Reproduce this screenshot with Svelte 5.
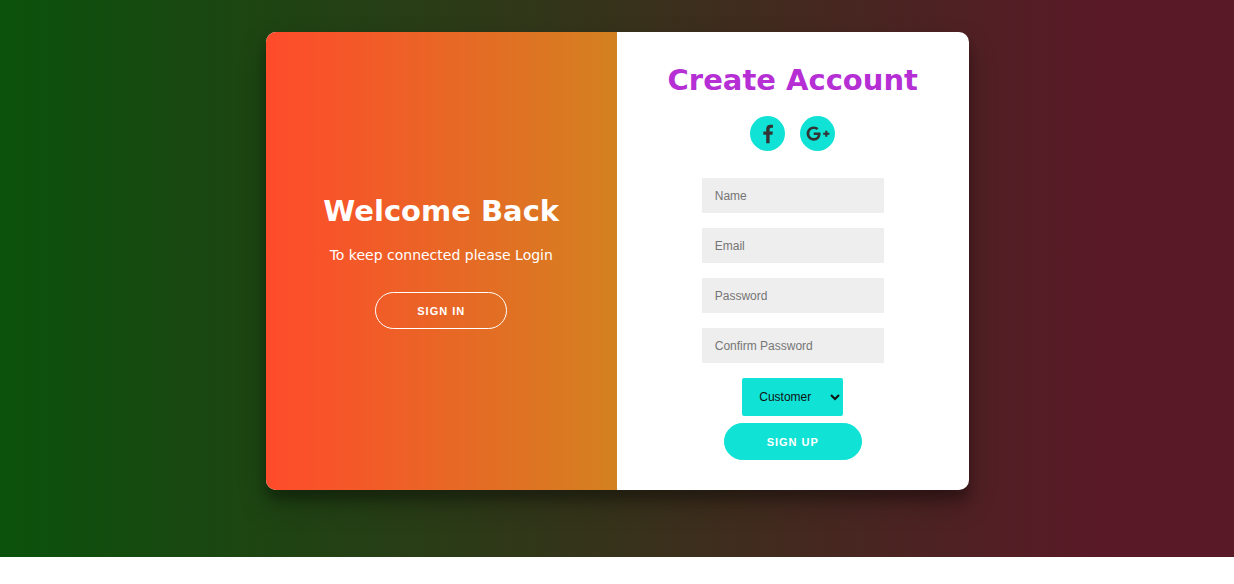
<script>
  let name = $state('');
  let email = $state('');
  let password = $state('');
  let confirm = $state('');
  let role = $state('Customer');
</script>

<main>
  <div class="card">
    <section class="welcome">
      <h1>Welcome Back</h1>
      <p>To keep connected please Login</p>
      <button class="ghost" type="button">Sign In</button>
    </section>
    <form class="register" onsubmit={(e) => e.preventDefault()}>
      <h1>Create Account</h1>
      <div class="social">
        <a href="#facebook" aria-label="Facebook">
          <svg viewBox="0 -64 1792 1792" width="20" height="20"><path d="M1343 12v264h-157q-86 0-116 36t-30 108v189h293l-39 296h-254v759h-306v-759h-255v-296h255v-218q0-186 104-288.500t277-102.500q147 0 228 12z" /></svg>
        </a>
        <a href="#google" aria-label="Google Plus">
          <svg viewBox="0 0 640 512" width="24" height="19"><path d="M386.061 228.496c1.834 9.692 3.143 19.384 3.143 31.956C389.204 370.205 315.599 448 204.800 448c-106.084 0-192-85.915-192-192s85.916-192 192-192c51.864 0 95.083 18.859 128.611 50.292l-52.126 50.030c-14.145-13.621-39.028-29.599-76.485-29.599-65.484 0-118.920 54.221-118.920 121.277 0 67.056 53.436 121.277 118.920 121.277 75.961 0 104.513-54.745 108.965-82.773H204.800v-66.009h181.261zm185.406 6.437V179.200h-56.001v55.733h-55.733v56.001h55.733v55.733h56.001v-55.733H627.200v-56.001h-55.733z" /></svg>
        </a>
      </div>
      <input type="text" placeholder="Name" aria-label="Name" bind:value={name} />
      <input type="email" placeholder="Email" aria-label="Email" bind:value={email} />
      <input type="password" placeholder="Password" aria-label="Password" bind:value={password} />
      <input type="password" placeholder="Confirm Password" aria-label="Confirm Password" bind:value={confirm} />
      <select aria-label="Account type" bind:value={role}>
        <option>Customer</option>
        <option>Seller</option>
      </select>
      <button class="solid" type="submit">Sign Up</button>
    </form>
  </div>
</main>

<style>
  :global(body) {
    background: #fff;
    font-family: Verdana, "DejaVu Sans", sans-serif;
  }
  main {
    display: flex;
    justify-content: center;
    padding: 32px 16px 67px;
    background: linear-gradient(to right, #0b520c, #5a1927 90%);
  }
  .card {
    display: grid;
    grid-template-columns: 1fr 1fr;
    width: 100%;
    max-width: 703px;
    border-radius: 10px;
    overflow: hidden;
    background: #fff;
    box-shadow: 0 14px 28px rgba(0, 0, 0, 0.25), 0 10px 10px rgba(0, 0, 0, 0.22);
  }
  .welcome,
  .register {
    display: flex;
    flex-direction: column;
    align-items: center;
    text-align: center;
  }
  .welcome {
    justify-content: center;
    padding-bottom: 2px;
    color: #fff;
    background: linear-gradient(to right, #ff4b2b, #d38120);
  }
  .register {
    padding: 28px 24px 30px;
  }
  h1 {
    margin: 0;
    font-size: 29px;
    line-height: 40px;
  }
  .register h1 {
    color: #b52fd5;
  }
  p {
    margin: 14px 0 27px;
    font-size: 14px;
    line-height: 20px;
  }
  .social {
    display: flex;
    gap: 15px;
    margin: 16px 0 27px;
  }
  .social a {
    display: flex;
    align-items: center;
    justify-content: center;
    width: 35px;
    height: 35px;
    border-radius: 50%;
    background: #10e2d5;
    color: #333;
  }
  .social svg {
    fill: currentColor;
  }
  input {
    box-sizing: border-box;
    width: 182px;
    height: 35px;
    margin: 0 0 15px;
    padding: 0 13px;
    border: 0;
    border-radius: 1px;
    background: #eee;
    font: 12px "Liberation Sans", Arial, sans-serif;
  }
  input::placeholder {
    color: #757575;
  }
  select {
    width: 101px;
    height: 38px;
    margin: 0 0 7px;
    padding: 0 0 0 13px;
    border: 0;
    border-radius: 2px;
    background: #10e2d5;
    color: #111;
    font: 12px "Liberation Sans", Arial, sans-serif;
  }
  button {
    height: 37px;
    border-radius: 20px;
    color: #fff;
    font: bold 11px "Liberation Sans", Arial, sans-serif;
    letter-spacing: 1px;
    text-transform: uppercase;
    cursor: pointer;
  }
  .ghost {
    padding: 0 41px;
    border: 1px solid #fff;
    background: transparent;
  }
  .solid {
    padding: 0 42px;
    border: 1px solid #10e2d5;
    background: #10e2d5;
  }
</style>
